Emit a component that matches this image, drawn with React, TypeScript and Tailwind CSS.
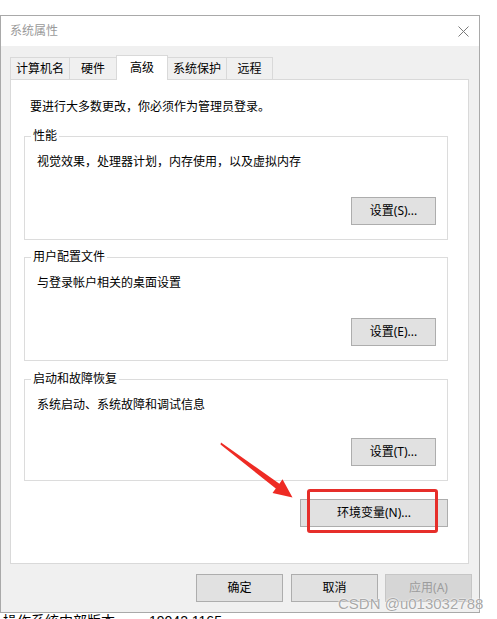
import React from 'react';

const font = "font-['Noto_Sans','Noto_Sans_CJK_SC',sans-serif]";

const tabs = [
  { label: '计算机名', w: 'w-[60px]' },
  { label: '硬件', w: 'w-[48px]' },
  { label: '高级', w: 'w-[52px]', active: true },
  { label: '系统保护', w: 'w-[60px]' },
  { label: '远程', w: 'w-[47px]' },
];

const groups = [
  { title: '性能', text: '视觉效果，处理器计划，内存使用，以及虚拟内存', btn: '设置(S)...', h: 'h-[104px]', mt: 'mt-[21px]' },
  { title: '用户配置文件', text: '与登录帐户相关的桌面设置', btn: '设置(E)...', h: 'h-[104px]', mt: 'mt-[17px]' },
  { title: '启动和故障恢复', text: '系统启动、系统故障和调试信息', btn: '设置(T)...', h: 'h-[102px]', mt: 'mt-[18px]' },
];

function Button({ children, className = '', disabled = false }: { children: React.ReactNode; className?: string; disabled?: boolean }) {
  return (
    <div
      className={`h-[28px] flex items-center justify-center text-[12px] leading-[16px] border ${
        disabled ? 'bg-[#d6d6d6] border-[#c6c6c6] text-[#9c9c9c]' : 'bg-[#e1e1e1] border-[#adadad] text-black'
      } ${className}`}
    >
      {children}
    </div>
  );
}

export default function App() {
  return (
    <div className={`relative h-[619px] w-[497px] overflow-hidden bg-white pt-[15px] ${font}`}>
      {/* dialog window */}
      <div className="w-[480px] border border-[#a9a9a9] bg-[#f0f0f0]">
        {/* title bar */}
        <div className="h-[30px] bg-white flex items-center justify-between pl-[9px] pr-[10px]">
          <span className="text-[12px] leading-[16px] text-[#9a9a9a]">系统属性</span>
          <svg width="11" height="11" viewBox="0 0 11 11">
            <path d="M0.5 0.5 L10.5 10.5 M10.5 0.5 L0.5 10.5" stroke="#7a7a7a" strokeWidth="1" fill="none" />
          </svg>
        </div>

        {/* tabs */}
        <div className="mt-[9px] ml-[9px] flex items-end">
          {tabs.map((t, i) => (
            <div
              key={t.label}
              className={`${t.w} ${i > 0 ? '-ml-px' : ''} flex items-center justify-center border-l border-t border-r border-[#d9d9d9] text-[12px] leading-[16px] text-black ${
                t.active ? 'relative z-10 h-[25px] -mb-px bg-white' : 'h-[22px] bg-[#f0f0f0]'
              }`}
            >
              {t.label}
            </div>
          ))}
        </div>

        {/* panel */}
        <div className="ml-[9px] w-[459px] h-[485px] border border-[#d9d9d9] bg-white flex flex-col">
          <p className="pt-[19px] pl-[19px] text-[12px] leading-[16px] text-black">要进行大多数更改，你必须作为管理员登录。</p>

          {groups.map((g) => (
            <div key={g.title} className={`relative ${g.mt} ml-[13px] w-[424px] ${g.h} border border-[#dcdcdc] flex flex-col`}>
              <span className="absolute left-[6px] top-[-9px] bg-white px-[2px] text-[12px] leading-[16px] text-black">{g.title}</span>
              <p className="pt-[17px] pl-[12px] text-[12px] leading-[16px] text-black">{g.text}</p>
              <Button className="mt-auto mb-[14px] mr-[11px] self-end w-[85px]">{g.btn}</Button>
            </div>
          ))}

          <div className="relative mt-[18px] ml-[289px] w-[148px]">
            <Button className="w-[148px]">环境变量(N)...</Button>
            <div className="absolute left-[7px] top-[-10px] w-[131px] h-[44px] border-[3px] border-[#e62e2a] rounded-[3px]" />
          </div>
        </div>

        {/* footer buttons */}
        <div className="mt-[10px] mb-[10px] mr-[7px] flex justify-end gap-[8px]">
          <Button className="w-[87px]">确定</Button>
          <Button className="w-[87px]">取消</Button>
          <Button className="w-[87px] -ml-px" disabled>应用(A)</Button>
        </div>
      </div>

      <p className="pl-[3px] text-[14px] leading-[16px] text-black whitespace-nowrap">
        操作系统内部版本<span className="ml-[34px] font-['Liberation_Sans',sans-serif]">19042.1165</span>
      </p>

      {/* annotation arrow */}
      <svg className="absolute left-0 top-0 pointer-events-none" width="497" height="619">
        <polygon
          points="221,442.5 279.4,483.8 282.5,479.2 292.5,497.5 272.5,493 275.8,488.6 220.5,444.5"
          fill="#ee2b24"
        />
      </svg>

      {/* watermark */}
      <span
        className="absolute left-[338px] top-[595px] text-[15px] leading-[17px] text-[#a8a8a8] font-['Liberation_Sans',sans-serif] whitespace-nowrap [text-shadow:0_0_2px_#fff,0_0_1px_#fff]"
      >
        CSDN @u013032788
      </span>
    </div>
  );
}
